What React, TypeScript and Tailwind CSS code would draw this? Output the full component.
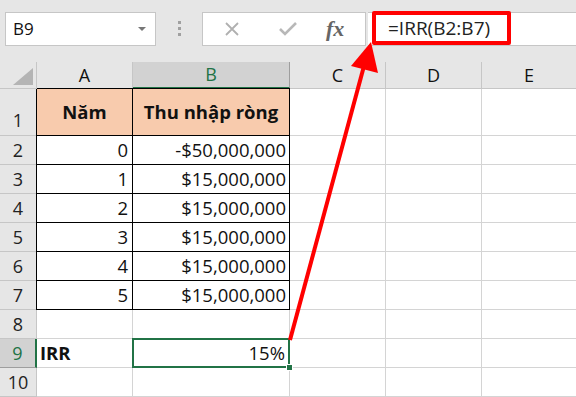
import React from "react";

const rows = [
  { n: 2, a: "0", b: "-$50,000,000" },
  { n: 3, a: "1", b: "$15,000,000" },
  { n: 4, a: "2", b: "$15,000,000" },
  { n: 5, a: "3", b: "$15,000,000" },
  { n: 6, a: "4", b: "$15,000,000" },
  { n: 7, a: "5", b: "$15,000,000" },
];

const cell = "border-r border-b border-[#d4d4d4] bg-white";
const rowHead =
  "flex items-center justify-center border-r border-b border-[#c6c6c6] bg-[#e6e6e6] text-[#222]";
const boxed = "border-r border-b border-black";

export default function App() {
  return (
    <div
      className="relative w-[576px] h-[397px] overflow-hidden bg-white text-[17px] text-[#111]"
      style={{ fontFamily: '"Open Sans", "Noto Sans", sans-serif' }}
    >
      {/* Toolbar with name box and formula bar */}
      <div className="h-[62px] bg-[#e6e6e6] flex items-start pt-[12px]">
        <div className="ml-[5px] w-[151px] h-[34px] bg-white border border-[#c6c6c6] flex items-center justify-between pl-[7px] pr-[9px]">
          <span className="text-[17px]">B9</span>
          <span className="w-0 h-0 border-l-[4px] border-r-[4px] border-t-[4px] border-l-transparent border-r-transparent border-t-[#777]" />
        </div>
        <div className="w-[46px] flex flex-col items-center gap-[3px] pt-[9px]">
          <span className="w-[3px] h-[3px] bg-[#a0a0a0]" />
          <span className="w-[3px] h-[3px] bg-[#a0a0a0]" />
          <span className="w-[3px] h-[3px] bg-[#a0a0a0]" />
        </div>
        <div className="w-[164px] h-[34px] bg-white border border-[#c6c6c6] flex items-center">
          <svg width="16" height="16" viewBox="0 0 16 16" className="ml-[21px]">
            <path d="M2 2 L14 14 M14 2 L2 14" stroke="#b0b0b0" strokeWidth="1.8" />
          </svg>
          <svg width="20" height="16" viewBox="0 0 20 16" className="ml-[38px]">
            <path d="M2 8 L7 13 L18 2" stroke="#b8b8b8" strokeWidth="2.6" fill="none" />
          </svg>
          <span
            className="ml-[28px] italic font-bold text-[22px] text-[#666] leading-none"
            style={{ fontFamily: '"Liberation Serif", "DejaVu Serif", serif' }}
          >
            fx
          </span>
        </div>
        <div className="relative ml-[2px] flex-1 h-[34px] bg-white border-y border-[#c6c6c6]">
          <div className="absolute left-[4px] top-[-2px] w-[139px] h-[34px] border-[4px] border-[#ff0000] rounded-[2px] flex items-center pl-[12px] text-[19px] text-[#222]">
            =IRR(B2:B7)
          </div>
        </div>
      </div>

      {/* Sheet grid */}
      <div className="grid grid-cols-[37px_96px_157px_96px_96px_1fr] grid-rows-[27px_47px_repeat(9,29px)] text-[18px]">
        {/* column headers */}
        <div className="relative border-r border-b border-[#c6c6c6] bg-[#e6e6e6]">
          <svg className="absolute right-[3px] bottom-[3px]" width="20" height="17" viewBox="0 0 20 17">
            <polygon points="20,0 20,17 0,17" fill="#b4b4b4" />
          </svg>
        </div>
        <div className="flex items-center justify-center border-r border-b border-[#c6c6c6] bg-[#e6e6e6]">A</div>
        <div className="flex items-center justify-center border-r border-[#9e9e9e] border-b-2 border-b-[#217346] bg-[#d2d2d2] text-[#217346]">B</div>
        <div className="flex items-center justify-center border-r border-b border-[#c6c6c6] bg-[#e6e6e6]">C</div>
        <div className="flex items-center justify-center border-r border-b border-[#c6c6c6] bg-[#e6e6e6]">D</div>
        <div className="flex items-center justify-center border-b border-[#c6c6c6] bg-[#e6e6e6]">E</div>

        {/* row 1 */}
        <div className={`${rowHead} items-end pb-[1px]`}>1</div>
        <div className={`${boxed} border-l border-t -ml-px -mt-px bg-[#f8cbad] flex items-center justify-center font-bold text-[18.5px]`}>Năm</div>
        <div className={`${boxed} border-t -mt-px bg-[#f8cbad] flex items-center justify-center font-bold text-[18.5px]`}>Thu nhập ròng</div>
        <div className={cell} />
        <div className={cell} />
        <div className="border-b border-[#d4d4d4]" />

        {rows.map((r) => (
          <React.Fragment key={r.n}>
            <div className={rowHead}>{r.n}</div>
            <div className={`${boxed} border-l -ml-px bg-white flex items-center justify-end pr-[4px] text-[18.5px]`}>{r.a}</div>
            <div className={`${boxed} bg-white flex items-center justify-end pr-[3px] text-[18.5px]`}>{r.b}</div>
            <div className={cell} />
            <div className={cell} />
            <div className="border-b border-[#d4d4d4]" />
          </React.Fragment>
        ))}

        {/* row 8 */}
        <div className={rowHead}>8</div>
        <div className={cell} />
        <div className={cell} />
        <div className={cell} />
        <div className={cell} />
        <div className="border-b border-[#d4d4d4]" />

        {/* row 9 */}
        <div className="flex items-center justify-center border-r-2 border-r-[#217346] border-b border-[#9e9e9e] bg-[#d2d2d2] text-[#217346]">9</div>
        <div className={`${cell} flex items-center pl-[3px] font-bold text-[18.5px]`}>IRR</div>
        <div className="relative -ml-px -mt-px border-2 border-[#217346] bg-white flex items-center justify-end pr-[3px] text-[18.5px]">
          15%
          <span className="absolute right-[-5px] bottom-[-5px] w-[7px] h-[7px] bg-[#217346] border border-white" />
        </div>
        <div className={cell} />
        <div className={cell} />
        <div className="border-b border-[#d4d4d4]" />

        {/* row 10 */}
        <div className={rowHead}>10</div>
        <div className={cell} />
        <div className={cell} />
        <div className={cell} />
        <div className={cell} />
        <div className="border-b border-[#d4d4d4]" />
      </div>

      {/* red annotation arrow */}
      <svg className="absolute left-0 top-0 pointer-events-none" width="576" height="397" viewBox="0 0 576 397">
        <line x1="290" y1="340" x2="364" y2="66" stroke="#ff0000" strokeWidth="4" />
        <polygon points="371,42 351,66 378,73" fill="#ff0000" />
      </svg>
    </div>
  );
}
